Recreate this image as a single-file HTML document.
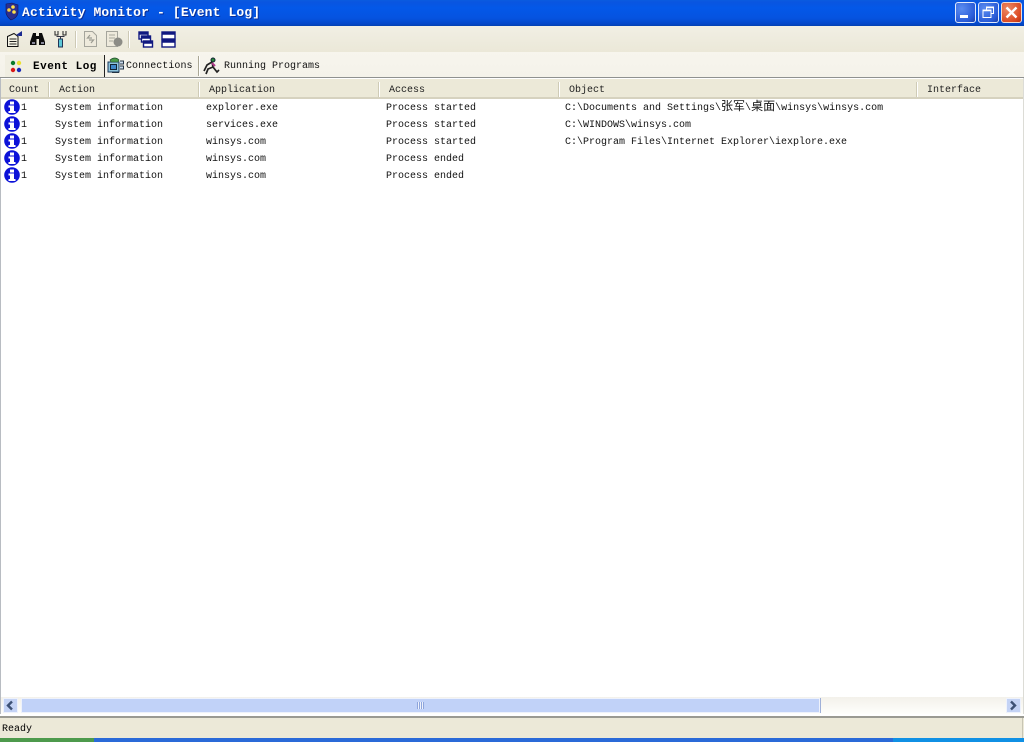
<!DOCTYPE html>
<html><head><meta charset="utf-8"><style>
html,body{margin:0;padding:0;background:#fff}
#r{position:relative;width:1024px;height:742px;overflow:hidden;background:#fff;font-family:"Liberation Mono","Noto Sans CJK SC",monospace;font-size:10px;color:#000}
.a{position:absolute}
.t{position:absolute;white-space:pre;line-height:12px;height:12px;font-size:10px;color:#111;transform:translateY(1px)}
.h{position:absolute;top:85px;white-space:pre;line-height:12px;font-size:10px;color:#222}
.s{position:absolute;top:82px;width:1px;height:15px;background:#cfcbb6;border-right:1px solid #fff}
svg{position:absolute;overflow:visible}
.cj{font-family:"Noto Sans CJK SC",sans-serif;font-size:12px;letter-spacing:0;line-height:0}
</style></head><body><div id="r">
<div class="a" style="left:0;top:0;width:1024px;height:26px;background:linear-gradient(#0a5be0 0,#0a55e0 2px,#0458e8 8px,#0553e0 18px,#0446c8 24px,#0340b0 26px)"></div>
<svg style="left:5px;top:3px" width="14" height="18" viewBox="0 0 14 18"><path d="M1 1L7 0L13 2V10Q12 15 6 17Q2 14 1 10Z" fill="#2b2f90" stroke="#11145a" stroke-width=".6"/><circle cx="8" cy="4" r="1.8" fill="#ffe24a"/><circle cx="4" cy="7" r="1.8" fill="#ffd23a"/><circle cx="9" cy="9" r="1.8" fill="#ffe24a"/></svg>
<div class="a" style="left:22px;top:5px;color:#fff;font-weight:bold;font-size:13px;letter-spacing:.14px;line-height:16px;white-space:pre;text-shadow:1px 1px 0 #0a2f9a">Activity Monitor - [Event Log]</div>

<div class="a" style="left:955px;top:2px;width:19px;height:19px;border:1px solid #dfe9fb;border-radius:3px;background:radial-gradient(circle at 30% 30%,#5a8cf0,#2a5cd8 70%,#1a3ea8)"></div>
<div class="a" style="left:960px;top:15px;width:8px;height:3px;background:#fff"></div>
<div class="a" style="left:978px;top:2px;width:19px;height:19px;border:1px solid #dfe9fb;border-radius:3px;background:radial-gradient(circle at 30% 30%,#5a8cf0,#2a5cd8 70%,#1a3ea8)"></div>
<svg style="left:982px;top:6px" width="13" height="13" viewBox="0 0 13 13" fill="none" stroke="#fff"><path d="M4.5 3.5V1h7v6.5H9" stroke-width="1"/><rect x="1" y="4" width="8" height="7.5" stroke-width="1"/><path d="M1 4.5h8M4.5 1.5h7" stroke-width="1.6"/></svg>
<div class="a" style="left:1001px;top:2px;width:19px;height:19px;border:1px solid #f0dcd4;border-radius:3px;background:radial-gradient(circle at 30% 30%,#ee8a66,#dc4c24 70%,#b83010)"></div>
<svg style="left:1005px;top:6px" width="13" height="13" viewBox="0 0 13 13"><path d="M1.5 1.5L11.5 11.5M11.5 1.5L1.500 11.5" stroke="#fff" stroke-width="2.4"/></svg>

<div class="a" style="left:0;top:26px;width:1024px;height:26px;background:linear-gradient(#f1efe4,#ebe8d8)"></div>
<div class="a" style="left:0;top:52px;width:1024px;height:25px;background:linear-gradient(#f7f5ed,#f4f2ea)"></div>

<svg style="left:6px;top:31px" width="18" height="16" viewBox="0 0 18 16"><path d="M1.500 5.500L8 2.500L12 5.500V15.500H1.500Z" fill="#f4f2e4" stroke="#111"/><path d="M3.500 8h7M3.500 10.500h7M3.500 13h7" stroke="#222" stroke-width="1"/><path d="M10 4L16 0V5L13 5" fill="#1a2a90"/></svg>
<svg style="left:30px;top:32px" width="16" height="14" viewBox="0 0 16 14"><path d="M3 1h3v3h3V1h3l3 9v3H9V7H6.500v6H0v-3Z" fill="#0c0c0c"/><rect x="2" y="10" width="3" height="2" fill="#889"/><rect x="11" y="10" width="3" height="2" fill="#889"/></svg>
<svg style="left:54px;top:31px" width="14" height="16" viewBox="0 0 14 16" fill="none"><path d="M1 0v4h3V0M9 0v4h3V0" stroke="#222"/><path d="M2.500 5.500h8M6.500 5.500V8" stroke="#334"/><rect x="4.500" y="8" width="4" height="8" fill="#5cc8d8" stroke="#235"/></svg>
<div class="a" style="left:75px;top:31px;width:1px;height:17px;background:#cdc9b5;border-right:1px solid #fff"></div>
<svg style="left:84px;top:31px" width="13" height="16" viewBox="0 0 13 16"><path d="M.5.500h8l4 4v11H.5Z" fill="#eeeadc" stroke="#a5a59c"/><path d="M6 4l-2.500 3H8M7 12l2.500-3H5" fill="none" stroke="#9c9c92" stroke-width="1.200"/></svg>
<svg style="left:106px;top:31px" width="17" height="16" viewBox="0 0 17 16"><path d="M.5.500h11v15H.5Z" fill="#eeeadc" stroke="#a5a59c"/><path d="M3 4h6M3 7h6M3 10h4" stroke="#a8a89c"/><circle cx="12" cy="11" r="4.500" fill="#8c8c86"/></svg>
<div class="a" style="left:128px;top:31px;width:1px;height:17px;background:#cdc9b5;border-right:1px solid #fff"></div>
<svg style="left:138px;top:31px" width="15" height="17" viewBox="0 0 15 17" fill="#fff" stroke="#101880" stroke-width="1.400"><rect x="1" y="1" width="9" height="7"/><path d="M1 2.500h9" stroke-width="2.500"/><rect x="3.500" y="5" width="9" height="6"/><path d="M3.500 6.500h9" stroke-width="2.500"/><rect x="5.500" y="10" width="9" height="6"/><path d="M5.500 11.500h9" stroke-width="2.500"/></svg>
<svg style="left:161px;top:31px" width="15" height="17" viewBox="0 0 15 17" fill="#fff" stroke="#101880" stroke-width="1.400"><rect x="1" y="1" width="13" height="7"/><path d="M1 2.500h13" stroke-width="2.500"/><rect x="1" y="9" width="13" height="7"/><path d="M1 10.500h13" stroke-width="2.500"/></svg>

<div class="a" style="left:5px;top:55px;width:99px;height:22px;background:#f0eee2"></div>
<div class="a" style="left:104px;top:55px;width:1px;height:22px;background:#222"></div>
<div class="a" style="left:198px;top:56px;width:1px;height:20px;background:#aaa795;border-right:1px solid #fff"></div>
<svg style="left:10px;top:60px" width="12" height="13" viewBox="0 0 12 13"><circle cx="3" cy="3" r="2.200" fill="#0a7a2a"/><circle cx="9" cy="3" r="2.200" fill="#ece030"/><circle cx="3" cy="10" r="2.200" fill="#d81818"/><circle cx="9" cy="10" r="2.200" fill="#1828b8"/></svg>
<div class="t" style="left:33px;top:60px;font-weight:bold;font-size:11px;letter-spacing:.5px;color:#000">Event Log</div>
<svg style="left:107px;top:57px" width="17" height="17" viewBox="0 0 17 17"><rect x="1" y="5" width="11" height="10" fill="#8fc4dc" stroke="#1c3a5c"/><rect x="3.500" y="7.500" width="6" height="5" fill="#3e86c8" stroke="#123"/><path d="M3 3Q8 -1 12 3L11 5H4Z" fill="#4a9a48" stroke="#1c4a2c" stroke-width=".6"/><path d="M13 4h3.500v3H13M13 9h3.500v3H13M5 15.500h7" fill="#cde" stroke="#234"/></svg>
<div class="t" style="left:126px;top:60px;letter-spacing:.05px">Connections</div>
<svg style="left:203px;top:57px" width="17" height="18" viewBox="0 0 17 18"><circle cx="10" cy="3" r="2" fill="#2a8a3a" stroke="#123"/><path d="M9 5L4 8L1 14M9 5L10 10L14 15L16 13M10 10L5 12L3 17" fill="none" stroke="#222" stroke-width="1.700"/><path d="M9 6L12 9" stroke="#b03a8a" stroke-width="2"/></svg>
<div class="t" style="left:224px;top:60px">Running Programs</div>

<div class="a" style="left:0;top:77px;width:1024px;height:1px;background:#8f9190"></div>
<div class="a" style="left:0;top:78px;width:1px;height:638px;background:#b8bcc2"></div>
<div class="a" style="left:1px;top:78px;width:1023px;height:1px;background:#fff"></div>
<div class="a" style="left:1px;top:79px;width:1022px;height:18px;background:#ece9d8"></div>
<div class="a" style="left:1px;top:97px;width:1022px;height:2px;background:#d6d2bf"></div>
<div class="a" style="left:1023px;top:78px;width:1px;height:638px;background:#dcdcd6"></div>

<div class="h" style="left:9px;letter-spacing:.05px">Count</div>
<div class="s" style="left:48px"></div>
<div class="h" style="left:59px">Action</div>
<div class="s" style="left:198px"></div>
<div class="h" style="left:209px">Application</div>
<div class="s" style="left:378px"></div>
<div class="h" style="left:389px">Access</div>
<div class="s" style="left:558px"></div>
<div class="h" style="left:569px">Object</div>
<div class="s" style="left:916px"></div>
<div class="h" style="left:927px">Interface</div>

<svg style="left:4px;top:99px" width="16" height="16" viewBox="0 0 16 16"><circle cx="8" cy="8" r="7.800" fill="#0c12d8"/><rect x="6" y="2.500" width="4" height="3" fill="#fff"/><path d="M4.500 6.500h5.500v5.500H11.500v2h-7V12H6V8.500H4.500Z" fill="#fff"/></svg>
<svg style="left:4px;top:116px" width="16" height="16" viewBox="0 0 16 16"><circle cx="8" cy="8" r="7.800" fill="#0c12d8"/><rect x="6" y="2.500" width="4" height="3" fill="#fff"/><path d="M4.500 6.500h5.500v5.500H11.500v2h-7V12H6V8.500H4.500Z" fill="#fff"/></svg>
<svg style="left:4px;top:133px" width="16" height="16" viewBox="0 0 16 16"><circle cx="8" cy="8" r="7.800" fill="#0c12d8"/><rect x="6" y="2.500" width="4" height="3" fill="#fff"/><path d="M4.500 6.500h5.500v5.500H11.500v2h-7V12H6V8.500H4.500Z" fill="#fff"/></svg>
<svg style="left:4px;top:150px" width="16" height="16" viewBox="0 0 16 16"><circle cx="8" cy="8" r="7.800" fill="#0c12d8"/><rect x="6" y="2.500" width="4" height="3" fill="#fff"/><path d="M4.500 6.500h5.500v5.500H11.500v2h-7V12H6V8.500H4.500Z" fill="#fff"/></svg>
<svg style="left:4px;top:167px" width="16" height="16" viewBox="0 0 16 16"><circle cx="8" cy="8" r="7.800" fill="#0c12d8"/><rect x="6" y="2.500" width="4" height="3" fill="#fff"/><path d="M4.500 6.500h5.500v5.500H11.500v2h-7V12H6V8.500H4.500Z" fill="#fff"/></svg>

<div class="t" style="left:21px;top:102px">1</div><div class="t" style="left:55px;top:102px">System information</div><div class="t" style="left:206px;top:102px">explorer.exe</div><div class="t" style="left:386px;top:102px">Process started</div>
<div class="t" style="left:565px;top:102px">C:\Documents and Settings\<span class="cj">张军</span>\<span class="cj">桌面</span>\winsys\winsys.com</div>
<div class="t" style="left:21px;top:119px">1</div><div class="t" style="left:55px;top:119px">System information</div><div class="t" style="left:206px;top:119px">services.exe</div><div class="t" style="left:386px;top:119px">Process started</div>
<div class="t" style="left:565px;top:119px">C:\WINDOWS\winsys.com</div>
<div class="t" style="left:21px;top:136px">1</div><div class="t" style="left:55px;top:136px">System information</div><div class="t" style="left:206px;top:136px">winsys.com</div><div class="t" style="left:386px;top:136px">Process started</div>
<div class="t" style="left:565px;top:136px">C:\Program Files\Internet Explorer\iexplore.exe</div>
<div class="t" style="left:21px;top:153px">1</div><div class="t" style="left:55px;top:153px">System information</div><div class="t" style="left:206px;top:153px">winsys.com</div><div class="t" style="left:386px;top:153px">Process ended</div>
<div class="t" style="left:21px;top:170px">1</div><div class="t" style="left:55px;top:170px">System information</div><div class="t" style="left:206px;top:170px">winsys.com</div><div class="t" style="left:386px;top:170px">Process ended</div>

<div class="a" style="left:1px;top:697px;width:1022px;height:17px;background:linear-gradient(#f3f1ea,#fefefb)"></div>
<div class="a" style="left:3px;top:698px;width:15px;height:15px;background:#c4d3f5;border:1px solid #eef2fc;box-sizing:border-box"></div>
<svg style="left:6px;top:701px" width="8" height="9" viewBox="0 0 8 9"><path d="M6 .500L2 4.500L6 8.500" fill="none" stroke="#3d5175" stroke-width="2.400"/></svg>
<div class="a" style="left:21px;top:698px;width:799px;height:15px;background:#c1d2f8;border:1px solid #eef2fc;box-sizing:border-box;box-shadow:1px 0 0 #9fb0d8"></div>
<div class="a" style="left:417px;top:702px;width:7px;height:7px;background:repeating-linear-gradient(90deg,#8ea5dc 0,#8ea5dc 1px,#eef2fc 1px,#eef2fc 2px)"></div>
<div class="a" style="left:1006px;top:698px;width:15px;height:15px;background:#c4d3f5;border:1px solid #eef2fc;box-sizing:border-box"></div>
<svg style="left:1009px;top:701px" width="8" height="9" viewBox="0 0 8 9"><path d="M2 .500L6 4.500L2 8.500" fill="none" stroke="#3d5175" stroke-width="2.400"/></svg>

<div class="a" style="left:0;top:714px;width:1024px;height:2px;background:#fff"></div>
<div class="a" style="left:0;top:716px;width:1024px;height:2px;background:#9a9a92"></div>
<div class="a" style="left:0;top:718px;width:1024px;height:20px;background:#ece9d8"></div>
<div class="a" style="left:1022px;top:718px;width:1px;height:20px;background:#c8c5b4"></div>
<div class="t" style="left:2px;top:723px;color:#000">Ready</div>
<div class="a" style="left:0;top:738px;width:94px;height:4px;background:#4d9a4c"></div>
<div class="a" style="left:94px;top:738px;width:799px;height:4px;background:#2a6ad8"></div>
<div class="a" style="left:893px;top:738px;width:131px;height:4px;background:#1090e4"></div>
</div></body></html>
